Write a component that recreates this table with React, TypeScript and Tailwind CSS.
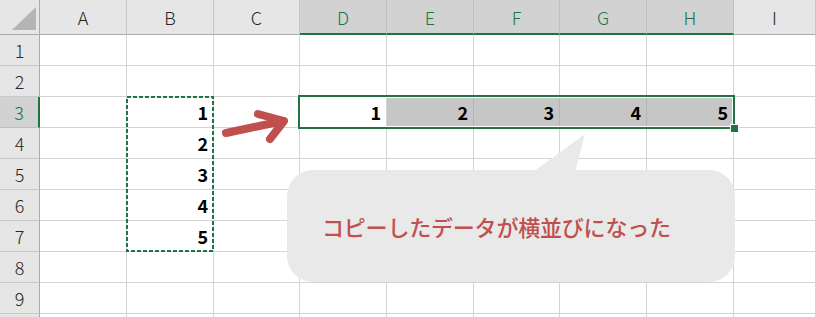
const COLS = ['A', 'B', 'C', 'D', 'E', 'F', 'G', 'H', 'I'];
const ROWS = [1, 2, 3, 4, 5, 6, 7, 8, 9, 10];

// values typed into the sheet, keyed by "col+row"
const values: Record<string, number> = {
  B3: 1, B4: 2, B5: 3, B6: 4, B7: 5,
  D3: 1, E3: 2, F3: 3, G3: 4, H3: 5,
};

const selectedCols = ['D', 'E', 'F', 'G', 'H'];
const filled = ['E3', 'F3', 'G3', 'H3'];

const font = { fontFamily: '"Noto Sans CJK JP", "Noto Sans", sans-serif' };

function ColumnHeader({ col }: { col: string }) {
  const selected = selectedCols.includes(col);
  return (
    <div
      className={
        selected
          ? 'flex items-center justify-center bg-[#d2d2d2] border-r border-[#bfbfbf] border-b-2 border-b-[#217346] text-[#217346] text-[18px] font-light'
          : 'flex items-center justify-center bg-[#e6e6e6] border-r border-[#c8c8c8] border-b border-b-[#ababab] text-[#262626] text-[18px] font-light'
      }
    >
      {col}
    </div>
  );
}

function RowHeader({ row }: { row: number }) {
  const selected = row === 3;
  return (
    <div
      className={
        selected
          ? 'flex items-center justify-center bg-[#d2d2d2] border-b border-[#bfbfbf] border-r-2 border-r-[#217346] text-[#217346] text-[18px] font-light'
          : 'flex items-center justify-center bg-[#e6e6e6] border-b border-[#c8c8c8] border-r border-r-[#ababab] text-[#262626] text-[18px] font-light'
      }
    >
      {/* row 10 only peeks in at the bottom edge */}
      {row < 10 ? row : ''}
    </div>
  );
}

function Cell({ id }: { id: string }) {
  const v = values[id];
  const isFilled = filled.includes(id);
  return (
    <div
      className={
        isFilled
          ? 'flex items-center justify-end pr-[5px] bg-[#c6c6c6] border-r border-b border-[#b4b4b4] text-[18px] font-bold text-black'
          : 'flex items-center justify-end pr-[5px] bg-white border-r border-b border-[#d4d4d4] text-[18px] font-bold text-black'
      }
    >
      {v !== undefined ? v : ''}
    </div>
  );
}

export default function App() {
  return (
    <div className="relative w-[816px] h-[317px] overflow-hidden bg-white" style={font}>
      <div className="grid grid-cols-[40px_87px_87px_86px_87px_87px_86px_87px_87px_1fr] grid-rows-[35px_repeat(10,31px)] leading-none">
        {/* corner */}
        <div className="relative bg-[#e6e6e6] border-r border-b border-[#ababab]">
          <svg className="absolute left-0 top-0" width="40" height="35">
            <polygon points="12,30 36,30 36,7" fill="#b4b4b4" />
          </svg>
        </div>
        {COLS.map((c) => (
          <ColumnHeader key={c} col={c} />
        ))}
        {ROWS.map((r) => (
          <div key={r} className="contents">
            <RowHeader row={r} />
            {COLS.map((c) => (
              <Cell key={c + r} id={c + r} />
            ))}
          </div>
        ))}
      </div>

      {/* copy marquee around B3:B7 */}
      <svg className="absolute left-[125px] top-[95px]" width="90" height="158">
        <rect x="2" y="2" width="86" height="154" fill="none" stroke="#217346" strokeWidth="2" strokeDasharray="4 2" />
      </svg>

      {/* selection D3:H3 */}
      <div className="absolute left-[298px] top-[95px] w-[437px] h-[34px] border-2 border-[#217346] shadow-[inset_0_0_0_1px_#ffffff]" />
      <div className="absolute left-[731px] top-[125px] w-[7px] h-[7px] bg-[#217346] outline outline-1 outline-white" />

      {/* arrow */}
      <svg className="absolute left-0 top-0 pointer-events-none" width="816" height="317">
        <g stroke="#c0504d" strokeWidth="8" strokeLinecap="round" strokeLinejoin="round" fill="none">
          <path d="M226 133 L283 121" />
          <path d="M258 114 L284 121 L270 139" />
        </g>
      </svg>

      {/* callout */}
      <svg className="absolute left-0 top-0 pointer-events-none" width="816" height="317">
        <polygon points="533,172 585,134 575,172" fill="#e9e9e9" />
      </svg>
      <div className="absolute left-[287px] top-[170px] w-[448px] h-[112px] rounded-[26px] bg-[#e9e9e9] flex items-center pl-[35px]">
        <span className="text-[22px] font-medium text-[#c0504d] tracking-[-0.2px]">コピーしたデータが横並びになった</span>
      </div>
    </div>
  );
}
